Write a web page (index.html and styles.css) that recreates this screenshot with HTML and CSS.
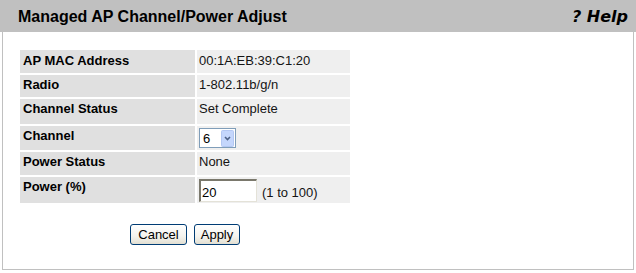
FILE: index.html
```html
<!DOCTYPE html>
<html>
<head>
<meta charset="utf-8">
<title>Managed AP Channel/Power Adjust</title>
<link rel="stylesheet" href="styles.css">
</head>
<body>
<div class="page">
  <div class="titlebar">
    <h1 class="title">Managed AP Channel/Power Adjust</h1>
    <span class="help">? Help</span>
  </div>
  <div class="panel">
    <table class="form">
      <tr class="row-a"><th>AP MAC Address</th><td>00:1A:EB:39:C1:20</td></tr>
      <tr class="row-b"><th>Radio</th><td>1-802.11b/g/n</td></tr>
      <tr class="row-c"><th>Channel Status</th><td>Set Complete</td></tr>
      <tr class="row-d"><th>Channel</th><td>
        <span class="select-wrap">
          <select class="select"><option>6</option></select>
          <svg class="select-btn" width="13" height="17" viewBox="0 0 13 17"><rect x="0.5" y="0.5" width="12" height="16" rx="1" fill="#c4d6fc" stroke="#b3c7f2"/><path d="M4 7 L6.5 9.5 L9 7" fill="none" stroke="#4d6185" stroke-width="1.6"/></svg>
        </span>
      </td></tr>
      <tr class="row-e"><th>Power Status</th><td>None</td></tr>
      <tr class="row-f"><th>Power (%)</th><td><input class="text-input" type="text" value="20"><span class="hint">(1 to 100)</span></td></tr>
    </table>
    <div class="actions">
      <button class="btn btn-cancel">Cancel</button>
      <button class="btn btn-apply">Apply</button>
    </div>
  </div>
</div>
</body>
</html>
```
FILE: styles.css
```css
html, body {
  margin: 0;
  padding: 0;
  background: #fff;
}
body {
  font-family: "Liberation Sans", Arial, sans-serif;
  font-size: 13px;
  color: #000;
}
.page {
  width: 636px;
}
.titlebar {
  height: 32px;
  background: #c0c0c0;
  display: flex;
  align-items: center;
  justify-content: space-between;
  padding: 0 8px 0 18px;
  box-sizing: border-box;
}
.title {
  margin: 0;
  font-family: "Liberation Sans", Arial, sans-serif;
  font-size: 16px;
  font-weight: bold;
  color: #000;
  padding-top: 1px;
}
.help {
  font-family: "DejaVu Sans", Verdana, sans-serif;
  font-size: 16px;
  font-weight: bold;
  font-style: italic;
  color: #000;
  padding-top: 1px;
}
.panel {
  margin: 0 2px;
  height: 238px;
  box-sizing: border-box;
  border: 1px solid #c0c0c0;
  border-top: none;
  padding: 16px 0 0 15px;
}
.form {
  border-collapse: separate;
  border-spacing: 2px;
  width: 334px;
}
.form th, .form td {
  padding: 2px 3px 0 3px;
  vertical-align: top;
  text-align: left;
  line-height: 15px;
}
.form th {
  width: 169px;
  background: #e0e0e0;
  font-weight: bold;
}
.form td {
  background: #efefef;
  color: #141414;
  padding-left: 2px;
}
.row-a { height: 23px; }
.row-a th, .row-a td { padding-top: 3px; }
.row-b { height: 22px; }
.row-c { height: 25px; }
.row-d { height: 24px; }
.row-e { height: 23px; }
.row-f { height: 26px; }

.select-wrap {
  position: relative;
  display: inline-block;
  width: 37px;
  height: 20px;
  vertical-align: top;
}
.select {
  appearance: none;
  -webkit-appearance: none;
  width: 37px;
  height: 20px;
  box-sizing: border-box;
  border: 1px solid #7f9db9;
  border-radius: 0;
  background: #fff;
  font-family: "Liberation Sans", Arial, sans-serif;
  font-size: 13px;
  color: #000;
  padding: 0 0 0 3px;
  margin: 0;
}
.select-btn {
  position: absolute;
  right: 2px;
  top: 2px;
  pointer-events: none;
}
.text-input {
  width: 58px;
  height: 23px;
  box-sizing: border-box;
  border-style: solid;
  border-width: 2px 1px 1px 2px;
  border-color: #7a786c #e4e2d8 #e4e2d8 #7a786c;
  font-family: "Liberation Sans", Arial, sans-serif;
  font-size: 13px;
  padding: 2px 1px 0 1px;
  margin: 0;
  vertical-align: top;
  color: #000;
}
.hint {
  display: inline-block;
  margin-left: 5px;
  padding-top: 6px;
  vertical-align: top;
}
.actions {
  width: 334px;
  margin-top: 19px;
  margin-left: 0;
  display: flex;
  justify-content: center;
  gap: 7px;
}
.btn {
  height: 21px;
  box-sizing: border-box;
  border: 1px solid #003c74;
  border-radius: 3px;
  background: linear-gradient(#ffffff 0%, #f4f3ee 60%, #e2dfd2 100%);
  font-family: "Liberation Sans", Arial, sans-serif;
  font-size: 13px;
  color: #000;
  padding: 0;
  margin: 0;
  line-height: 17px;
}
.btn-cancel { width: 57px; }
.btn-apply { width: 46px; }
```
